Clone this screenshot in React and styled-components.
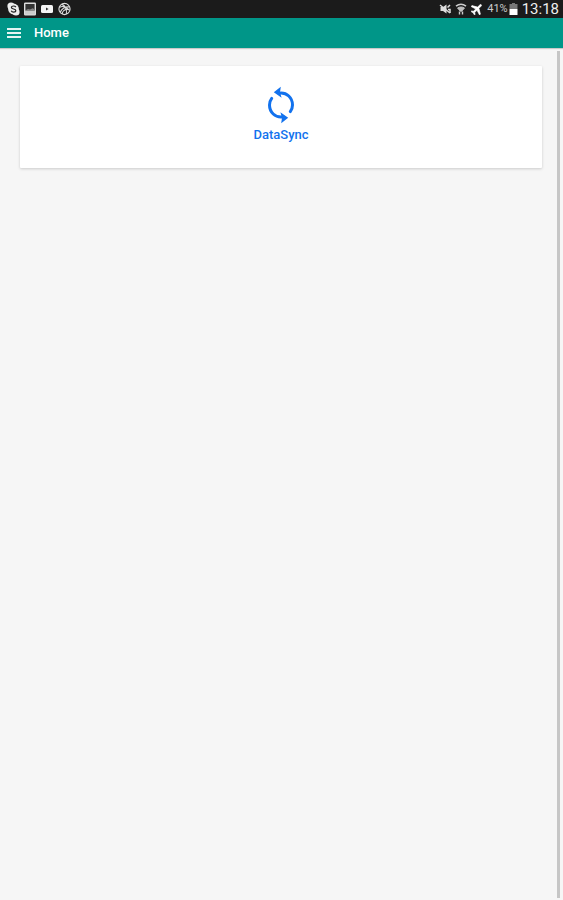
import styled, { createGlobalStyle } from "styled-components";

const App = () => {
  return (
    <>
      <GlobalStyle />
      <Screen>
        <StatusBar>
          <StatusGroup $gap="4px">
            <SkypeIcon />
            <PictureIcon />
            <VideoIcon />
            <BallIcon />
          </StatusGroup>
          <StatusGroup $gap="4px">
            <MuteIcon />
            <WifiIcon />
            <PlaneIcon />
            <Battery>
              <span>41%</span>
              <BatteryIcon />
            </Battery>
            <Clock>13:18</Clock>
          </StatusGroup>
        </StatusBar>
        <Toolbar>
          <MenuButton type="button" aria-label="Menu">
            <svg width="14" height="12" viewBox="0 0 14 12" fill="#e4f4f2">
              <path d="M0 1h14v2H0zM0 5h14v2H0zM0 9h14v2H0z" />
            </svg>
          </MenuButton>
          <Title>Home</Title>
        </Toolbar>
        <Content>
          <Card>
            <SyncButton type="button">
              <SyncIcon />
              <span>DataSync</span>
            </SyncButton>
          </Card>
          <ScrollTrack>
            <ScrollThumb />
          </ScrollTrack>
        </Content>
      </Screen>
    </>
  );
};

// Status bar icons
const SkypeIcon = () => (
  <svg width="13" height="14" viewBox="0 0 13 14">
    <circle cx="4" cy="4" r="3.6" fill="#eee" />
    <circle cx="9" cy="10" r="3.6" fill="#eee" />
    <circle cx="6.5" cy="7" r="5.4" fill="#eee" />
    <path
      d="M8.9 5.1C8.3 4.2 7.5 4 6.5 4 5.3 4 4.4 4.6 4.4 5.5c0 2 4.4 1 4.4 3 0 1-1 1.6-2.2 1.6-1.1 0-2-.4-2.4-1.3"
      fill="none"
      stroke="#222"
      strokeWidth="1.2"
    />
  </svg>
);

const PictureIcon = () => (
  <svg width="12" height="14" viewBox="0 0 12 14">
    <rect x="0.7" y="1.2" width="10.6" height="11.6" rx="0.5" fill="#333" stroke="#ddd" strokeWidth="1.4" />
    <path d="M2 8l2-1 2 .5 2.600-1.200L10 7v1.400H2z" fill="#888" />
    <path d="M1 8.600h10V12.500H1z" fill="#ccc" />
  </svg>
);

const VideoIcon = () => (
  <svg width="14" height="14" viewBox="0 0 14 14">
    <rect x="1" y="3" width="12" height="8" rx="1.5" fill="#f5f5f5" />
    <path d="M6 5.500v3L8.600 7z" fill="#333" />
  </svg>
);

const BallIcon = () => (
  <svg width="13" height="14" viewBox="0 0 14 14" fill="none" stroke="#ddd" strokeWidth="1.2">
    <circle cx="7" cy="7" r="6" />
    <path d="M1.500 5.400C4 3.600 8 4 12.400 8.600M2.400 10.600C4 7 7.600 4.400 12.300 4.800M4.500 12.400C4.600 9.600 7 7.400 10.400 7.400M4 2c3 .6 6 4.600 5 10.400" />
  </svg>
);

const MuteIcon = () => (
  <svg width="12" height="14" viewBox="0 0 12 14">
    <path d="M1.500 5H4l3.500-2.500v9L4 9H1.500z" fill="#ddd" />
    <path d="M8.500 5.500L11 3M9 7.500h2v3.500" fill="none" stroke="#ddd" strokeWidth="1.5" />
    <path d="M1 3l10 8" stroke="#ddd" strokeWidth="1.5" />
  </svg>
);

const WifiIcon = () => (
  <svg width="12" height="14" viewBox="0 0 12 14" fill="none" stroke="#ccc">
    <path d="M1 4.200c3-2.300 7-2.300 10 0" strokeWidth="1.600" />
    <path d="M2.500 6c2-1.400 5-1.400 7 0L6.800 9.200H5.200z" fill="#bbb" strokeWidth="0.8" />
    <path d="M4.500 9.500v3M7.500 9.500v3" strokeWidth="1.400" />
  </svg>
);

const PlaneIcon = () => (
  <svg width="12" height="14" viewBox="2 2 20 20" fill="#fff" stroke="#fff" strokeWidth="1">
    <path
      transform="rotate(45 12 12)"
      d="M22 16v-2l-8.500-5V3.500C13.500 2.670 12.830 2 12 2s-1.500.670-1.500 1.500V9L2 14v2l8.500-2.500V19L8 20.500V22l4-1 4 1v-1.500L13.500 19v-5.500L22 16z"
    />
  </svg>
);

const BatteryIcon = () => (
  <svg width="9" height="14" viewBox="0 0 9 14">
    <path d="M3 1h3v1h2.500v5H.500V2H3z" fill="#777" />
    <path d="M.500 7h8v6h-8z" fill="#fff" />
  </svg>
);

// Two arcs with arrow heads, the second is the first turned by half
const SyncIcon = () => (
  <svg width="40" height="40" viewBox="0 0 40 40">
    <SyncArrow />
    <g transform="rotate(180 20 20)">
      <SyncArrow />
    </g>
  </svg>
);

const SyncArrow = () => (
  <>
    <path
      d="M18 8.200C26 7 31.500 13 31.500 20c0 2.400-.7 4.600-2.200 6.600"
      fill="none"
      stroke="currentColor"
      strokeWidth="3"
      strokeLinecap="round"
    />
    <path d="M12.800 7.300L19.800 1.800 19 7.200 20.600 12.800z" fill="currentColor" />
  </>
);

// Global styles
const GlobalStyle = createGlobalStyle`
  * {
    margin: 0;
    padding: 0;
    box-sizing: border-box;
  }

  body {
    font-family: Roboto, "Liberation Sans", sans-serif;
    background-color: #f6f6f6;
  }

  svg {
    display: block;
    flex: none;
  }
`;

const Screen = styled.div`
  display: flex;
  flex-direction: column;
  min-height: 100vh;
`;

const StatusBar = styled.div`
  display: flex;
  align-items: center;
  justify-content: space-between;
  height: 18px;
  padding: 0 4px 0 7px;
  background-color: #1b1b1b;
  color: #eee;
`;

const StatusGroup = styled.div`
  display: flex;
  align-items: center;
  gap: ${(props) => props.$gap};
`;

const Battery = styled.div`
  display: flex;
  align-items: center;
  gap: 1px;
  font-size: 11px;
  line-height: 18px;
  color: #ccc;
`;

const Clock = styled.time`
  font-size: 15px;
  line-height: 18px;
`;

const Toolbar = styled.header`
  display: flex;
  align-items: center;
  gap: 13px;
  height: 30px;
  padding: 0 7px;
  background-color: #009688;
  box-shadow: 0 1px 1px rgba(0, 0, 0, 0.18);
`;

const MenuButton = styled.button`
  border: none;
  background: none;
  cursor: pointer;
`;

const Title = styled.h1`
  font-size: 13px;
  font-weight: 500;
  line-height: 18px;
  color: #fff;
`;

const Content = styled.main`
  position: relative;
  flex: 1;
  padding: 18px 21px 18px 20px;
`;

const Card = styled.section`
  display: flex;
  justify-content: center;
  padding: 19px 16px 23px;
  background-color: #fff;
  border-radius: 1px;
  box-shadow: 0 1px 3px rgba(0, 0, 0, 0.18);
`;

const SyncButton = styled.button`
  display: flex;
  flex-direction: column;
  align-items: center;
  border: none;
  background: none;
  color: #1272ee;
  font-family: inherit;
  font-size: 13px;
  font-weight: 500;
  line-height: 20px;
  cursor: pointer;
`;

const ScrollTrack = styled.div`
  position: absolute;
  top: 0;
  right: 3px;
  bottom: 0;
  display: flex;
  width: 3px;
  padding: 3px 0 2px;
`;

const ScrollThumb = styled.div`
  flex: 1;
  background-color: #c6c6c6;
`;

export default App;
